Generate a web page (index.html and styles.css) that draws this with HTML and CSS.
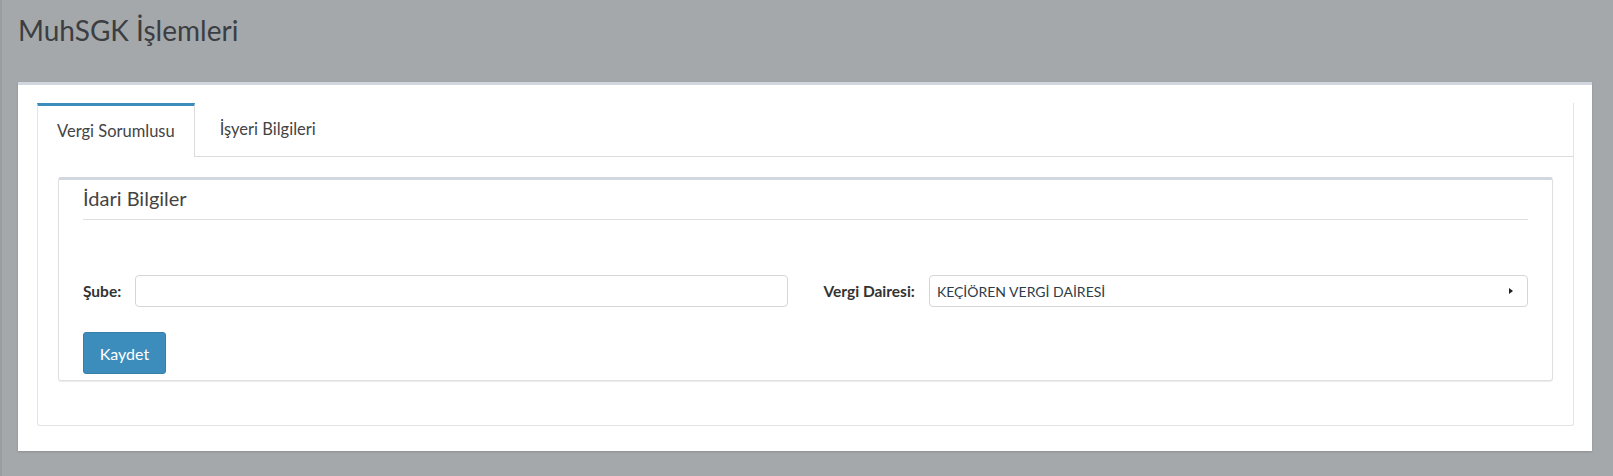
FILE: index.html
```html
<!DOCTYPE html>
<html lang="tr">
<head>
    <meta charset="UTF-8">
    <title>MuhSGK İşlemleri</title>
    <link rel="stylesheet" href="styles.css">
</head>
<body>
    <section class="content-header">
        <h1>MuhSGK İşlemleri</h1>
    </section>

    <section class="box">
        <div class="nav-tabs-custom">
            <ul class="nav-tabs">
                <li class="active">Vergi Sorumlusu</li>
                <li>İşyeri Bilgileri</li>
                <li class="tab-filler"></li>
            </ul>

            <div class="tab-content">
                <div class="panel">
                    <h3 class="panel-title">İdari Bilgiler</h3>

                    <div class="form-row">
                        <div class="form-group">
                            <label>Şube:</label>
                            <div class="form-control"></div>
                        </div>
                        <div class="form-group">
                            <label>Vergi Dairesi:</label>
                            <div class="form-control select">
                                <span>KEÇİÖREN VERGİ DAİRESİ</span>
                                <span class="caret"></span>
                            </div>
                        </div>
                    </div>

                    <button class="btn-primary">Kaydet</button>
                </div>
            </div>
        </div>
    </section>
</body>
</html>
```

FILE: styles.css
```css
body {
    margin: 0;
    padding: 0 21px 0 16px;
    background-color: #a5a8ab;
    border-left: 2px solid #9a9da0;
    font-family: 'Lato', 'Open Sans', sans-serif;
    color: #444;
    height: 476px;
    box-sizing: border-box;
}

.content-header {
    height: 82px;
}

.content-header h1 {
    margin: 0;
    padding-top: 13px;
    font-size: 28px;
    font-weight: normal;
    color: #3b3e42;
}

.box {
    background: #fff;
    border-top: 3px solid #d2d6de;
    padding: 18px 18px 25px 19px;
    box-shadow: 0 1px 2px rgba(0, 0, 0, 0.15);
}

.nav-tabs-custom {
    border: 1px solid #e3e3e3;
    border-top: none;
    border-radius: 0 0 3px 3px;
}

.nav-tabs {
    list-style: none;
    margin: 0;
    padding: 0;
    display: flex;
    height: 54px;
}

.nav-tabs li {
    padding: 0 26px 0 25px;
    font-size: 16.5px;
    line-height: 53px;
    border-bottom: 1px solid #dcdcdc;
    color: #444;
}

.nav-tabs li.active {
    padding: 0 19px 0 19px;
    border-top: 3px solid #3c8dbc;
    border-right: 1px solid #dcdcdc;
    border-bottom: none;
    line-height: 50px;
    margin-left: -1px;
    border-left: 1px solid #e3e3e3;
}

.nav-tabs li.tab-filler {
    flex: 1;
    padding: 0;
}

.tab-content {
    padding: 20px 20px 44px 20px;
}

.panel {
    border: 1px solid #e0e0e0;
    border-top: 3px solid #d2d6de;
    border-radius: 3px;
    box-shadow: 0 1px 1px rgba(0, 0, 0, 0.08);
    padding: 0 24px 6px 24px;
}

.panel-title {
    margin: 0;
    padding: 6px 0 9px;
    font-size: 20px;
    line-height: 1.2;
    font-weight: normal;
    color: #444;
    border-bottom: 1px solid #dedede;
}

.form-row {
    display: grid;
    grid-template-columns: 1fr 1fr;
    gap: 36px;
    padding-top: 55px;
}

.form-group {
    display: flex;
    align-items: center;
    gap: 14px;
}

.form-group label {
    font-size: 15.5px;
    font-weight: bold;
    color: #333;
    white-space: nowrap;
}

.form-control {
    flex: 1;
    height: 30px;
    border: 1px solid #d6d6d6;
    border-radius: 4px;
    box-sizing: content-box;
}

.select {
    display: flex;
    align-items: center;
    justify-content: space-between;
    padding: 0 14px 0 7px;
    font-size: 14px;
    color: #2f3b47;
}

.caret {
    width: 0;
    height: 0;
    border-top: 3px solid transparent;
    border-bottom: 3px solid transparent;
    border-left: 4px solid #222;
}

.btn-primary {
    margin-top: 25px;
    width: 83px;
    height: 42px;
    background-color: #3c8dbc;
    border: 1px solid #367fa9;
    border-radius: 3px;
    color: #fff;
    font-family: 'Lato', 'Open Sans', sans-serif;
    font-size: 16px;
}
```
